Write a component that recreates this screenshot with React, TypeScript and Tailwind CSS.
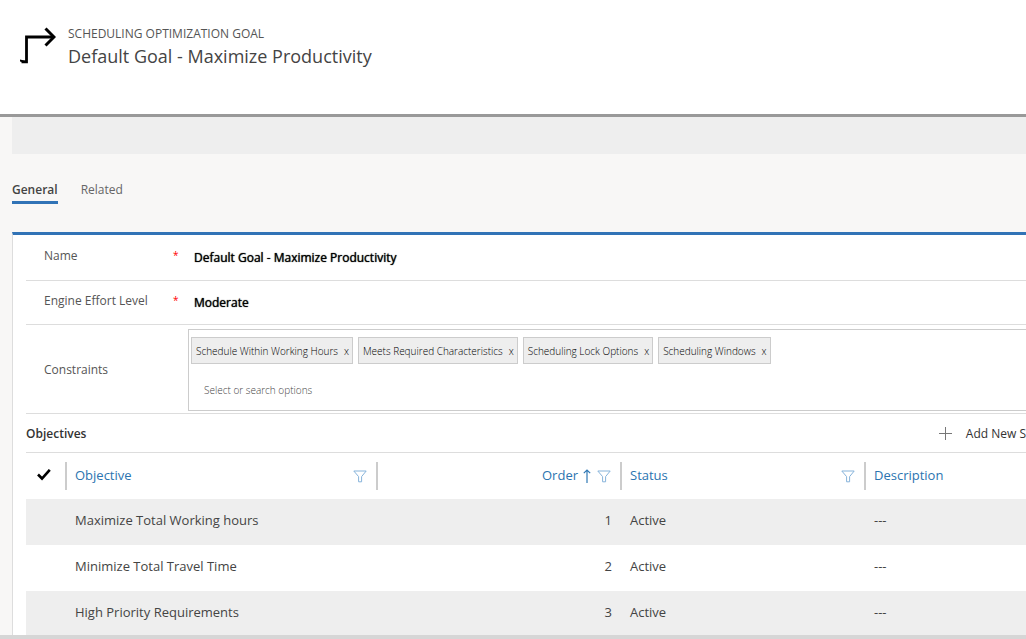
import React from "react";

const constraints = [
  "Schedule Within Working Hours",
  "Meets Required Characteristics",
  "Scheduling Lock Options",
  "Scheduling Windows",
];

const objectives = [
  { name: "Maximize Total Working hours", order: 1, status: "Active", description: "---" },
  { name: "Minimize Total Travel Time", order: 2, status: "Active", description: "---" },
  { name: "High Priority Requirements", order: 3, status: "Active", description: "---" },
];

function GoalIcon() {
  return (
    <svg width="36" height="38" viewBox="0 0 36 38" fill="none" stroke="#000" aria-hidden="true">
      <path d="M1.5 35.8H6.5V11H34" strokeWidth="2.8" />
      <path d="M25.5 2.5L34 11L25.5 19.5" strokeWidth="3" />
      <path d="M-0.5 34.4L6 36" strokeWidth="2" />
    </svg>
  );
}

function FilterIcon() {
  return (
    <svg width="14" height="13" viewBox="0 0 14 13" fill="none" stroke="#86b3da" aria-hidden="true">
      <path d="M0.8 1H13.2L8.6 6.6V11.8H5.6V6.6Z" />
    </svg>
  );
}

function SortIcon() {
  return (
    <svg width="8" height="14" viewBox="0 0 8 14" fill="none" stroke="#3079b5" aria-hidden="true">
      <path d="M4 14V1M0.8 4.2L4 1L7.2 4.2" strokeWidth="1.2" />
    </svg>
  );
}

function CheckIcon() {
  return (
    <svg width="14" height="12" viewBox="0 0 14 12" fill="none" stroke="#000" aria-hidden="true">
      <path d="M1 5.5L5 9.5L12.8 0.8" strokeWidth="2.6" />
    </svg>
  );
}

function FieldLabel({ htmlFor, children }: { htmlFor: string; children: React.ReactNode }) {
  return (
    <label htmlFor={htmlFor} className="w-[147px] shrink-0 pl-[18px] text-[12px] leading-4 text-[#555]">
      {children}
    </label>
  );
}

function RequiredMark() {
  return <span className="w-[15px] text-[10px] leading-[14px] text-[#f00]">*</span>;
}

function HeaderCell({ label, filter }: { label: string; filter?: boolean }) {
  return (
    <th className="h-[46px] p-0 font-normal">
      <div className="flex h-7 items-center justify-between border-l-2 border-[#ccc] pr-[9px] pl-2">
        <button type="button">{label}</button>
        {filter && (
          <button type="button" aria-label={`Filter ${label}`}>
            <FilterIcon />
          </button>
        )}
      </div>
    </th>
  );
}

export default function App() {
  return (
    <div className="flex h-screen flex-col overflow-hidden border-b-4 border-[#d6d6d6] bg-[#f8f7f6] font-['Open_Sans','Noto_Sans',sans-serif] text-[#444]">
      <header className="flex h-[117px] shrink-0 items-start gap-3 border-b-3 border-[#999] bg-white pt-[26px] pl-5">
        <GoalIcon />
        <div>
          <p className="text-[12px] leading-4 text-[#555]">SCHEDULING OPTIMIZATION GOAL</p>
          <h1 className="text-[18px] leading-7">Default Goal - Maximize Productivity</h1>
        </div>
      </header>

      <main className="flex min-h-0 flex-1 flex-col overflow-hidden pl-3">
        <div className="h-[37px] shrink-0 bg-[#eee]" />

        <nav className="mt-7 mb-7 flex items-start gap-[23px] text-[12px] leading-4">
          <a href="#general" className="border-b-3 border-[#3173b6] pb-[3px] font-semibold text-[#444]">General</a>
          <a href="#related" className="text-[#666]">Related</a>
        </nav>

        <section className="flex-1 border-t-3 border-l border-t-[#3173b6] border-l-[#ddd] bg-white pl-[13px]">
          <div className="flex h-[46px] items-center border-b border-[#ddd]">
            <div className="flex pb-[3px]">
              <FieldLabel htmlFor="name">Name</FieldLabel>
              <RequiredMark />
            </div>
            <input id="name" defaultValue="Default Goal - Maximize Productivity" className="min-w-0 flex-1 pl-[6px] text-[12px] leading-4 font-medium text-black outline-none [text-shadow:0_0_1px_#000]" />
          </div>
          <div className="flex h-[44px] items-center border-b border-[#ddd]">
            <div className="flex pb-[3px]">
              <FieldLabel htmlFor="effort">Engine Effort Level</FieldLabel>
              <RequiredMark />
            </div>
            <select id="effort" className="min-w-0 flex-1 appearance-none pl-[6px] text-[12px] leading-4 font-medium text-black outline-none [text-shadow:0_0_1px_#000]">
              <option>Moderate</option>
            </select>
          </div>
          <div className="flex items-center border-b border-[#ddd] pt-1 pb-[2px]">
            <FieldLabel htmlFor="constraints">Constraints</FieldLabel>
            <div className="ml-[15px] flex-1 border border-r-0 border-[#ccc] pt-[7px] pb-3 pl-[2px]">
              <ul className="flex gap-[5px]">
                {constraints.map((name) => (
                  <li key={name} className="flex h-[27px] items-center gap-[6px] border border-[#ccc] bg-[#eee] pt-px pr-[3px] pl-1 text-[10px] font-light text-black">
                    {name}
                    <button type="button" aria-label={`Remove ${name}`}>x</button>
                  </li>
                ))}
              </ul>
              <input id="constraints" placeholder="Select or search options" className="mt-[18px] block h-4 w-full pl-[13px] text-[10px] font-light outline-none placeholder:text-[#444]" />
            </div>
          </div>

          <div className="flex h-[39px] items-center justify-between border-b border-[#ddd] pt-px text-[12px]">
            <h2 className="font-semibold text-[#333]">Objectives</h2>
            <button type="button" className="flex items-center gap-[14px] whitespace-nowrap text-[#333]">
              <svg width="13" height="13" viewBox="0 0 13 13" stroke="#777" aria-hidden="true">
                <path d="M6.5 0V13M0 6.5H13" />
              </svg>
              Add New S
            </button>
          </div>

          <table className="w-full table-fixed text-left text-[13px]">
            <colgroup>
              <col className="w-[39px]" />
              <col className="w-[311px]" />
              <col className="w-[244px]" />
              <col className="w-[244px]" />
              <col />
            </colgroup>
            <thead className="text-[#2b74b0]">
              <tr>
                <th className="p-0 pb-[2px] pl-[11px]">
                  <button type="button" aria-label="Select all" className="block">
                    <CheckIcon />
                  </button>
                </th>
                <HeaderCell label="Objective" filter />
                <th className="h-[46px] p-0 font-normal">
                  <div className="flex h-7 items-center justify-end gap-[6px] border-l-2 border-[#ccc] pr-[9px]">
                    <button type="button" className="flex items-center gap-[5px]">
                      Order
                      <SortIcon />
                    </button>
                    <button type="button" aria-label="Filter Order">
                      <FilterIcon />
                    </button>
                  </div>
                </th>
                <HeaderCell label="Status" filter />
                <HeaderCell label="Description" />
              </tr>
            </thead>
            <tbody>
              {objectives.map((row) => (
                <tr key={row.name} className="h-[46px] odd:bg-[#eee]">
                  <td />
                  <td className="p-0 pb-[2px] pl-[10px]">{row.name}</td>
                  <td className="p-0 pr-[8px] pb-[2px] text-right">{row.order}</td>
                  <td className="p-0 pb-[2px] pl-[10px]">{row.status}</td>
                  <td className="p-0 pb-[2px] pl-[10px]">{row.description}</td>
                </tr>
              ))}
            </tbody>
          </table>
        </section>
      </main>
    </div>
  );
}
